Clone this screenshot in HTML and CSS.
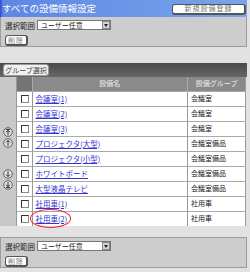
FILE: index.html
```html
<!DOCTYPE html>
<html lang="ja">
<head>
  <meta charset="UTF-8">
  <title>すべての設備情報設定</title>
  <link rel="stylesheet" href="styles.css">
</head>
<body>

<div class="page">

  <!-- Title -->
  <div class="titlebar">
    <h1>すべての設備情報設定</h1>
    <button class="btn btn-new">新規設備登録</button>
  </div>

  <!-- Top controls -->
  <div class="panel">
    <div class="range">
      <label>選択範囲</label>
      <div class="select">ユーザー任意<span class="arrow"></span></div>
    </div>
    <button class="btn btn-del">削除</button>
  </div>

  <!-- Facility list -->
  <div class="listbox">
    <div class="tabbar"><span class="tab">グループ選択</span></div>
    <div class="listbody">
      <div class="side">
        <div class="moves">
          <svg class="mv" viewBox="0 0 10 10"><circle cx="5" cy="5" r="4.3"/><path d="M5 8V3.2M3 5.2L5 3.2L7 5.2M3 2.4H7"/></svg>
          <svg class="mv" viewBox="0 0 10 10"><circle cx="5" cy="5" r="4.3"/><path d="M5 8V2.4M3 4.4L5 2.4L7 4.4"/></svg>
        </div>
        <div class="moves">
          <svg class="mv" viewBox="0 0 10 10"><circle cx="5" cy="5" r="4.3"/><path d="M5 2V7.6M3 5.6L5 7.6L7 5.6"/></svg>
          <svg class="mv" viewBox="0 0 10 10"><circle cx="5" cy="5" r="4.3"/><path d="M5 2V6.8M3 4.8L5 6.8L7 4.8M3 7.6H7"/></svg>
        </div>
      </div>
      <table class="items">
        <thead>
          <tr>
            <th class="c-chk"></th>
            <th class="c-name">設備名</th>
            <th class="c-grp">設備グループ</th>
          </tr>
        </thead>
        <tbody>
          <tr><td class="c-chk"><span class="chk"></span></td><td class="c-name"><a href="#">会議室(1)</a></td><td class="c-grp">会議室</td></tr>
          <tr><td class="c-chk"><span class="chk"></span></td><td class="c-name"><a href="#">会議室(2)</a></td><td class="c-grp">会議室</td></tr>
          <tr><td class="c-chk"><span class="chk"></span></td><td class="c-name"><a href="#">会議室(3)</a></td><td class="c-grp">会議室</td></tr>
          <tr><td class="c-chk"><span class="chk"></span></td><td class="c-name"><a href="#">プロジェクタ(大型)</a></td><td class="c-grp">会議室備品</td></tr>
          <tr><td class="c-chk"><span class="chk"></span></td><td class="c-name"><a href="#">プロジェクタ(小型)</a></td><td class="c-grp">会議室備品</td></tr>
          <tr><td class="c-chk"><span class="chk"></span></td><td class="c-name"><a href="#">ホワイトボード</a></td><td class="c-grp">会議室備品</td></tr>
          <tr><td class="c-chk"><span class="chk"></span></td><td class="c-name"><a href="#">大型液晶テレビ</a></td><td class="c-grp">会議室備品</td></tr>
          <tr><td class="c-chk"><span class="chk"></span></td><td class="c-name"><a href="#">社用車(1)</a></td><td class="c-grp">社用車</td></tr>
          <tr><td class="c-chk"><span class="chk"></span></td><td class="c-name"><a href="#" class="marked">社用車(2)</a></td><td class="c-grp">社用車</td></tr>
        </tbody>
      </table>
    </div>
  </div>

  <!-- Bottom controls -->
  <div class="panel panel-bottom">
    <div class="range">
      <label>選択範囲</label>
      <div class="select">ユーザー任意<span class="arrow"></span></div>
    </div>
    <button class="btn btn-del">削除</button>
  </div>

</div>

</body>
</html>
```

FILE: styles.css
```css
* {
  box-sizing: border-box;
}
body {
  margin: 0;
  background: #e2e2e2;
  font-family: "Noto Sans CJK JP", "DejaVu Sans", sans-serif;
  font-size: 7px;
  color: #222;
}
.page {
  width: 247px;
}
.titlebar {
  height: 17px;
  display: flex;
  align-items: center;
  justify-content: space-between;
  padding: 0 1px 0 2px;
  background: linear-gradient(to right, #2f48d2 0, #5d87e2 3px, #79a4ec 100%);
}
.titlebar h1 {
  margin: 0;
  font-size: 9.5px;
  font-weight: normal;
  line-height: 1;
  color: #fff;
}
.btn {
  font-family: inherit;
  font-size: 7px;
  line-height: 1;
  color: #777;
  background: #fff;
  border: 1px solid #555;
  border-right-width: 2px;
  border-bottom-width: 2px;
  border-radius: 3px;
  padding: 0;
  height: 11px;
}
.btn-new {
  width: 74px;
  letter-spacing: 1px;
  margin-top: 1px;
}
.btn-del {
  width: 23px;
  letter-spacing: 1px;
}
.panel {
  height: 30px;
  background: #cdcdcd;
  border: 1px solid #9c9c9c;
  border-top: none;
  padding: 3px 0 0 4px;
  display: flex;
  flex-direction: column;
  align-items: flex-start;
  gap: 5px;
}
.panel-bottom {
  margin-top: 11px;
  height: 31px;
  border-top: 1px solid #9c9c9c;
}
.range {
  display: flex;
  align-items: center;
  gap: 2px;
  height: 10px;
}
.range label {
  font-size: 7.5px;
}
.select {
  width: 74px;
  height: 10px;
  background: #fff;
  border: 1px solid #777;
  padding-left: 3px;
  display: flex;
  align-items: center;
  justify-content: space-between;
  line-height: 1;
}
.arrow {
  width: 8px;
  height: 8px;
  background: #d4d4d4;
  border: 1px solid #888;
  position: relative;
}
.arrow::after {
  content: "";
  position: absolute;
  left: 1px;
  top: 2px;
  border-left: 2.5px solid transparent;
  border-right: 2.5px solid transparent;
  border-top: 3px solid #222;
}
.listbox {
  margin-top: 16px;
}
.tabbar {
  height: 14px;
  background: linear-gradient(#4a4a4a, #676767);
  padding: 1px 0 0 3px;
}
.tab {
  display: inline-block;
  width: 46px;
  height: 12px;
  background: #f0f0f0;
  border: 1px solid #999;
  border-radius: 3px;
  color: #444;
  text-align: center;
  line-height: 10px;
}
.listbody {
  display: flex;
}
.side {
  width: 17px;
  background: #c8c8c8;
  border-right: 1px solid #999;
  padding: 50px 0 0 3px;
  display: flex;
  flex-direction: column;
  gap: 21px;
}
.moves {
  display: flex;
  flex-direction: column;
  gap: 1px;
}
.mv {
  width: 10px;
  height: 10px;
  display: block;
}
.mv circle {
  fill: #e4e4e4;
  stroke: #555;
  stroke-width: 0.9;
}
.mv path {
  fill: none;
  stroke: #333;
  stroke-width: 1;
}
.items {
  width: 229px;
  border-collapse: collapse;
  background: #fff;
  border-right: 1px solid #999;
}
.items th {
  height: 14px;
  padding: 0;
  font-weight: normal;
  color: #eee;
  background: #8a8a8a;
  border-left: 1px solid #aaa;
  line-height: 1;
}
.items th.c-chk {
  background: #747474;
  border-left: none;
}
.items td {
  height: 15px;
  padding: 0 0 0 3px;
  border-top: 1px solid #aaa;
  border-left: 1px solid #999;
  line-height: 1;
}
.c-chk {
  width: 15px;
}
.c-grp {
  width: 58px;
}
.items td.c-chk {
  border-left: none;
  padding-left: 4px;
}
.chk {
  display: block;
  width: 8px;
  height: 8px;
  border: 1px solid #888;
  border-top-color: #333;
  border-left-color: #333;
  background: #fff;
}
.items a {
  color: #3232d2;
  font-size: 7.5px;
}
.marked {
  position: relative;
}
.marked::after {
  content: "";
  position: absolute;
  left: -6px;
  right: -4px;
  top: -4px;
  bottom: -4px;
  border: 1.5px solid #e82a2a;
  border-radius: 50%;
}
```
